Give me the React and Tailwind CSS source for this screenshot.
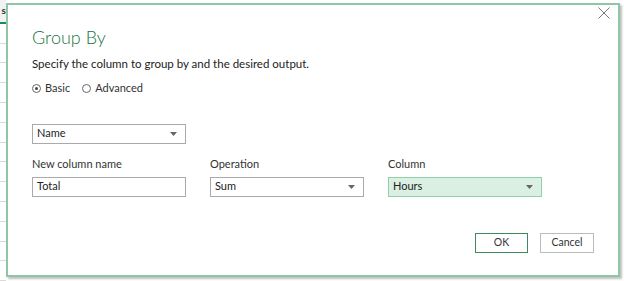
import React from "react";

const font = { fontFamily: 'Lato, "Open Sans", sans-serif' };

function Caret() {
  return (
    <svg width="7" height="4" viewBox="0 0 7 4" className="shrink-0">
      <path d="M0 0 L7 0 L3.5 4 Z" fill="#666" />
    </svg>
  );
}

function Radio({ checked, label }) {
  return (
    <div className="flex items-center gap-[4px]">
      <span className="flex h-[9px] w-[9px] items-center justify-center rounded-full border border-[#666] bg-white">
        {checked && <span className="h-[3px] w-[3px] rounded-full bg-[#444]" />}
      </span>
      <span className="text-[11px] text-[#333]">{label}</span>
    </div>
  );
}

function Select({ value, green }) {
  return (
    <div
      className={
        "flex h-[20px] w-[154px] items-center justify-between border pl-[4px] pr-[8px] text-[11px] text-[#222] " +
        (green ? "border-[#92d0ab] bg-[#d9f0e2]" : "border-[#aaa] bg-white")
      }
    >
      <span>{value}</span>
      <Caret />
    </div>
  );
}

export default function App() {
  return (
    <div className="flex h-[281px] w-[624px] bg-white" style={font}>
      {/* excel grid strip */}
      <div className="flex w-[6px] shrink-0 flex-col">
        <div className="flex h-[22px] items-center justify-end overflow-hidden bg-[#f2f2f2] text-[10px] font-bold text-[#333]">
          s
        </div>
        <div className="h-[2px] bg-[#1e8a5a]" />
        {Array.from({ length: 13 }).map((_, i) => (
          <div key={i} className="h-[20px] border-b border-[#dadada]" />
        ))}
      </div>
      {/* dialog */}
      <div className="ml-0 mt-[3px] flex h-[274px] w-[614px] flex-col border-2 border-[#8ec6a6] bg-white shadow-[2px_2px_2px_rgba(0,0,0,0.25)]">
        <div className="flex justify-end pr-[8px] pt-[2px]">
          <svg width="12" height="12" viewBox="0 0 12 12">
            <path d="M0.5 0.5 L11.5 11.5 M11.5 0.5 L0.5 11.5" stroke="#777" strokeWidth="1" />
          </svg>
        </div>
        <div className="flex flex-col pl-[24px]">
          <div className="mt-[6px] text-[18px] font-light leading-[24px] text-[#217346]">Group By</div>
          <div className="mt-[6px] text-[11.5px] leading-[18px] text-[#222]">
            Specify the column to group by and the desired output.
          </div>
          <div className="mt-[7px] flex items-center gap-[12px]">
            <Radio checked label="Basic" />
            <Radio label="Advanced" />
          </div>
          <div className="mt-[27px]">
            <Select value="Name" />
          </div>
          <div className="mt-[12px] flex gap-[24px]">
            <div className="flex flex-col gap-[5px]">
              <span className="text-[11px] leading-[16px] text-[#333]">New column name</span>
              <div className="flex h-[20px] w-[154px] items-center border border-[#aaa] pl-[4px] text-[11px] text-[#222]">
                Total
              </div>
            </div>
            <div className="flex flex-col gap-[5px]">
              <span className="text-[11px] leading-[16px] text-[#333]">Operation</span>
              <Select value="Sum" />
            </div>
            <div className="flex flex-col gap-[5px]">
              <span className="text-[11px] leading-[16px] text-[#333]">Column</span>
              <Select value="Hours" green />
            </div>
          </div>
          <div className="mt-[36px] flex justify-end gap-[12px] pr-[24px]">
            <button className="flex h-[20px] w-[53px] items-center justify-center border border-[#3d8a5f] text-[10.5px] text-[#333]">
              OK
            </button>
            <button className="flex h-[20px] w-[54px] items-center justify-center border border-[#bbb] text-[10.5px] text-[#333]">
              Cancel
            </button>
          </div>
        </div>
      </div>
    </div>
  );
}
